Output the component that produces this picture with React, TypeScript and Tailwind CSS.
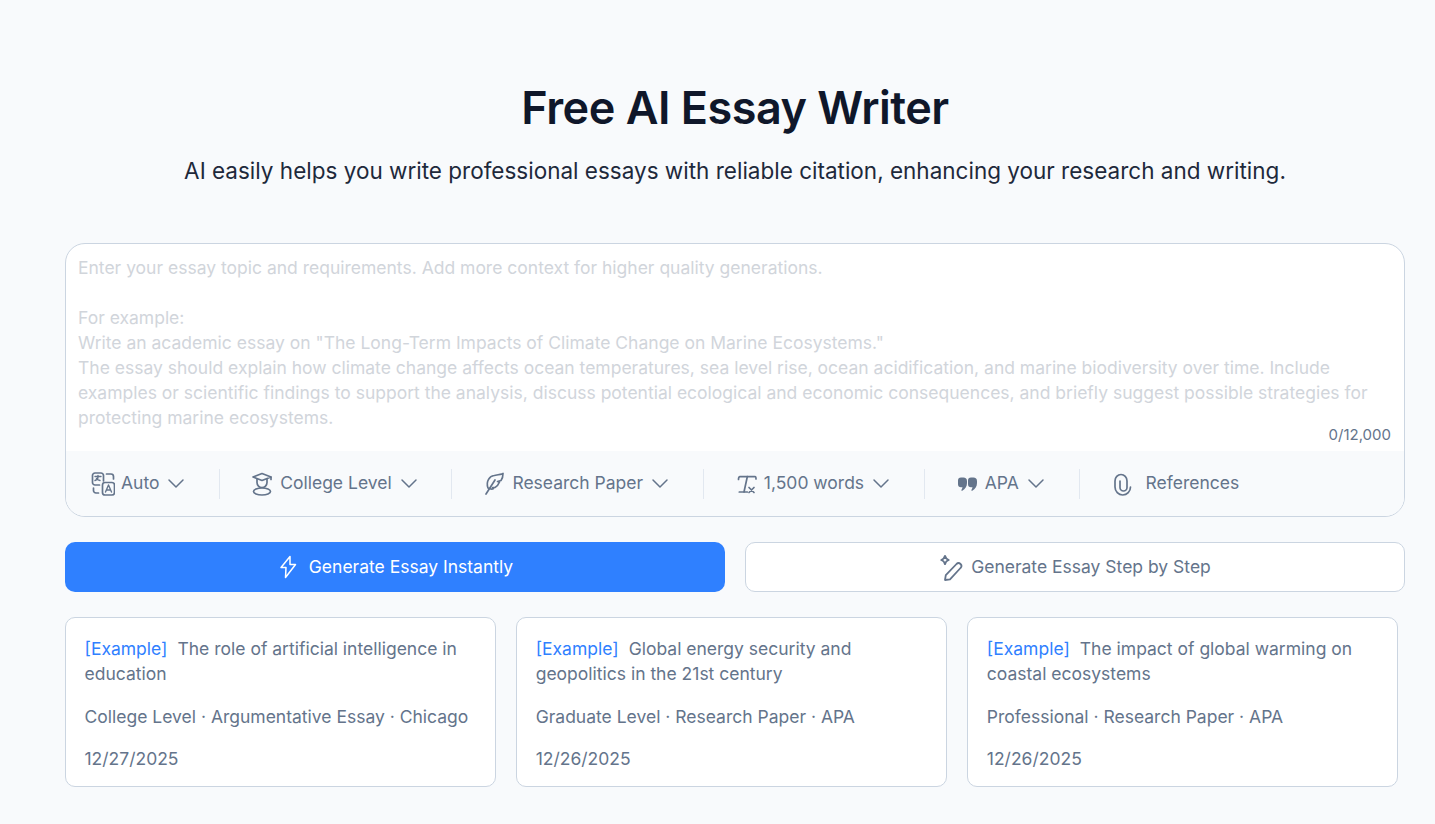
import React from "react";

const Sep = () => <div className="h-[30px] w-px bg-[#e2e8f0]" />;

const Ico = ({ children, box = "0 0 24 24" }: { children: React.ReactNode; box?: string }) => (
  <svg viewBox={box} fill="none" stroke="currentColor" strokeWidth="1.7" strokeLinecap="round" strokeLinejoin="round" className="h-6 w-6 shrink-0">
    {children}
  </svg>
);

const Translate = () => (
  <Ico box="-0.5 0 24 24">
    <path d="M12 9V3.500A2.500 2.500 0 0 0 9.500 1H3.500A2.500 2.500 0 0 0 1 3.500v7A2.500 2.500 0 0 0 3.500 13H8" />
    <path d="M3.500 4.500h6M6.500 3.500v1.500c0 1.800-1 3-3 3.500M5 6.500c.5 1 1.500 1.700 3.500 2" strokeWidth="1.400" />
    <path d="M15 2h4.500A2.500 2.500 0 0 1 22 4.500V7" />
    <path d="M2 16v2.500A2.500 2.500 0 0 0 4.500 21H7" />
    <rect x="11" y="10.500" width="12" height="12.500" rx="2.500" />
    <path d="M14 20l3-7 3 7M15.200 18h3.600" strokeWidth="1.400" />
  </Ico>
);
const Student = () => (
  <Ico>
    <path d="M12 1.500 3 5l9 3.500L21 5z" />
    <path d="M21 5v2.500" />
    <path d="M7 7v3.500a5 5 0 0 0 10 0V7" />
    <ellipse cx="12" cy="19.500" rx="8.500" ry="3.500" />
  </Ico>
);
const FeatherIcon = () => (
  <Ico>
    <path d="M4 22 13 8" />
    <path d="M6 16C3.500 9 8 4 12 3.500 15 3 19 2.500 21 1.500c0 2.500-.5 5-2 7L15.500 9.500l2 .5c-1 2.500-2.500 4.500-4.500 5.500h-2.500l1 1C10 17.500 8 17 6 16z" />
  </Ico>
);
const TextX = () => (
  <Ico>
    <path d="M4.500 7.500c0-2 .5-2.800 1.500-2.800h15c.7 0 1 .8 1 2.300" />
    <path d="M13.300 4.700 10 20" />
    <path d="M5.300 20h8" />
    <path d="m15 15.500 5 5M20 15.500l-5 5" />
  </Ico>
);
const Blob = "M5.500 5.500h2.300A3.700 3.700 0 0 1 11.500 9.200V11c0 3.500-1.800 6-4.700 7.700-.6.300-1.200-.4-.8-1 .5-.8.900-1.600 1-2.500H5.500a3 3 0 0 1-3-3V8.500a3 3 0 0 1 3-3z";
const Quote = () => (
  <svg viewBox="-0.5 0 24 24" fill="currentColor" className="h-6 w-6 shrink-0">
    <path d={Blob} />
    <path d={Blob} transform="translate(10 0)" />
  </svg>
);
const Clip = () => (
  <Ico>
    <path d="M20.500 15a7.750 8 0 0 1-15.500 0V9a6 6.500 0 0 1 12 0v6.500a3.500 3.500 0 0 1-7 0V9" />
  </Ico>
);
const Wand = () => (
  <svg viewBox="0 0 24 28" fill="none" stroke="currentColor" strokeWidth="1.800" strokeLinecap="round" strokeLinejoin="round" className="h-7 w-6 shrink-0">
    <path d="M6 27l.8-4.800L17.500 11a2.800 2.800 0 0 1 4 4L11 26.300z" />
    <path d="M6 2.800c.5 2.200 1.600 3.400 3.800 4.200-2.200.8-3.300 2-3.800 4.200C5.500 9 4.400 7.800 2.200 7c2.200-.8 3.300-2 3.800-4.200z" />
  </svg>
);
const Bolt = () => (
  <svg viewBox="-2.500 0 24 24" fill="none" stroke="currentColor" strokeWidth="1.500" strokeLinecap="round" strokeLinejoin="round" className="h-6 w-6 shrink-0">
    <path d="M10.500 1.500 1.500 12.500h5L6 22.500l10-13h-5.500z" />
  </svg>
);
const Caret = () => (
  <svg viewBox="0 0 18 18" fill="none" stroke="currentColor" strokeWidth="1.500" strokeLinecap="round" strokeLinejoin="round" className="ml-[2px] h-[18px] w-[18px] shrink-0">
    <path d="M2 5l7 7 7-7" />
  </svg>
);

const Opt = ({ icon, label, caret = true, pl, gap = "gap-[6px]" }: { icon: React.ReactNode; label: string; caret?: boolean; pl: string; gap?: string }) => (
  <div className={`flex items-center ${pl} pr-[33.700px] ${gap}`}>
    {icon}
    <span>{label}</span>
    {caret && <Caret />}
  </div>
);

const Card = ({ title, meta, date }: { title: string; meta: string; date: string }) => (
  <div className="flex h-[170px] flex-col rounded-[10px] border border-[#cbd5e1] bg-white pl-[18.500px] pr-[19px] pt-[18px] text-[17.500px] leading-[25px] text-[#64748b]">
    <p>
      <span className="mr-[10px] text-[#2f80ff]">[Example]</span>
      {title}
    </p>
    <p className="mt-[18px]">{meta}</p>
    <p className="mt-[17px]">{date}</p>
  </div>
);

export default function App() {
  return (
    <div className="min-h-[824px] bg-[#f8fafc] pl-[65px] pr-[30px] font-['Inter',sans-serif]">
      <h1 className="pt-[76px] text-center text-[45px] leading-[64px] font-semibold tracking-[-0.5px] text-[#0f172a]">Free AI Essay Writer</h1>
      <p className="mt-[15px] text-center text-[22.500px] leading-[32px] text-[#1e293b]">
        AI easily helps you write professional essays with reliable citation, enhancing your research and writing.
      </p>

      <div className="mt-[56px] h-[274px] overflow-hidden rounded-[20px] border border-[#cbd5e1] bg-white">
        <div className="relative h-[207px] px-3 pt-[11px] text-[17.500px] leading-[25px] text-[#d1d5db]">
          <p>Enter your essay topic and requirements. Add more context for higher quality generations.</p>
          <p className="mt-[25px]">For example:</p>
          <p>Write an academic essay on "The Long-Term Impacts of Climate Change on Marine Ecosystems."</p>
          <p>The essay should explain how climate change affects ocean temperatures, sea level rise, ocean acidification, and marine biodiversity over time. Include examples or scientific findings to support the analysis, discuss potential ecological and economic consequences, and briefly suggest possible strategies for protecting marine ecosystems.</p>
          <span className="absolute right-[13px] bottom-[6px] text-[15px] leading-5 text-[#64748b]">0/12,000</span>
        </div>
        <div className="flex h-[65px] items-center bg-[#f8fafc] text-[17.500px] text-[#64748b]">
          <Opt icon={<Translate />} label="Auto" pl="pl-[25px]" />
          <Sep />
          <Opt icon={<Student />} label="College Level" pl="pl-[30px]" />
          <Sep />
          <Opt icon={<FeatherIcon />} label="Research Paper" pl="pl-[30px]" />
          <Sep />
          <Opt icon={<TextX />} label="1,500 words" pl="pl-[30px]" />
          <Sep />
          <Opt icon={<Quote />} label="APA" pl="pl-[30px]" />
          <Sep />
          <Opt icon={<Clip />} label="References" caret={false} pl="pl-[30px]" gap="gap-3" />
        </div>
      </div>

      <div className="mt-[25px] grid grid-cols-2 gap-5">
        <button className="flex h-[50px] items-center justify-center gap-2 rounded-[10px] bg-[#2f80ff] text-[17.500px] font-normal text-white">
          <Bolt />
          Generate Essay Instantly
        </button>
        <button className="flex h-[50px] items-center justify-center gap-2 rounded-[10px] border border-[#cbd5e1] bg-white text-[17.500px] text-[#64748b]">
          <Wand />
          Generate Essay Step by Step
        </button>
      </div>

      <div className="mt-[25px] grid w-[1333px] grid-cols-3 gap-[20.500px]">
        <Card title="The role of artificial intelligence in education" meta="College Level · Argumentative Essay · Chicago" date="12/27/2025" />
        <Card title="Global energy security and geopolitics in the 21st century" meta="Graduate Level · Research Paper · APA" date="12/26/2025" />
        <Card title="The impact of global warming on coastal ecosystems" meta="Professional · Research Paper · APA" date="12/26/2025" />
      </div>
    </div>
  );
}
